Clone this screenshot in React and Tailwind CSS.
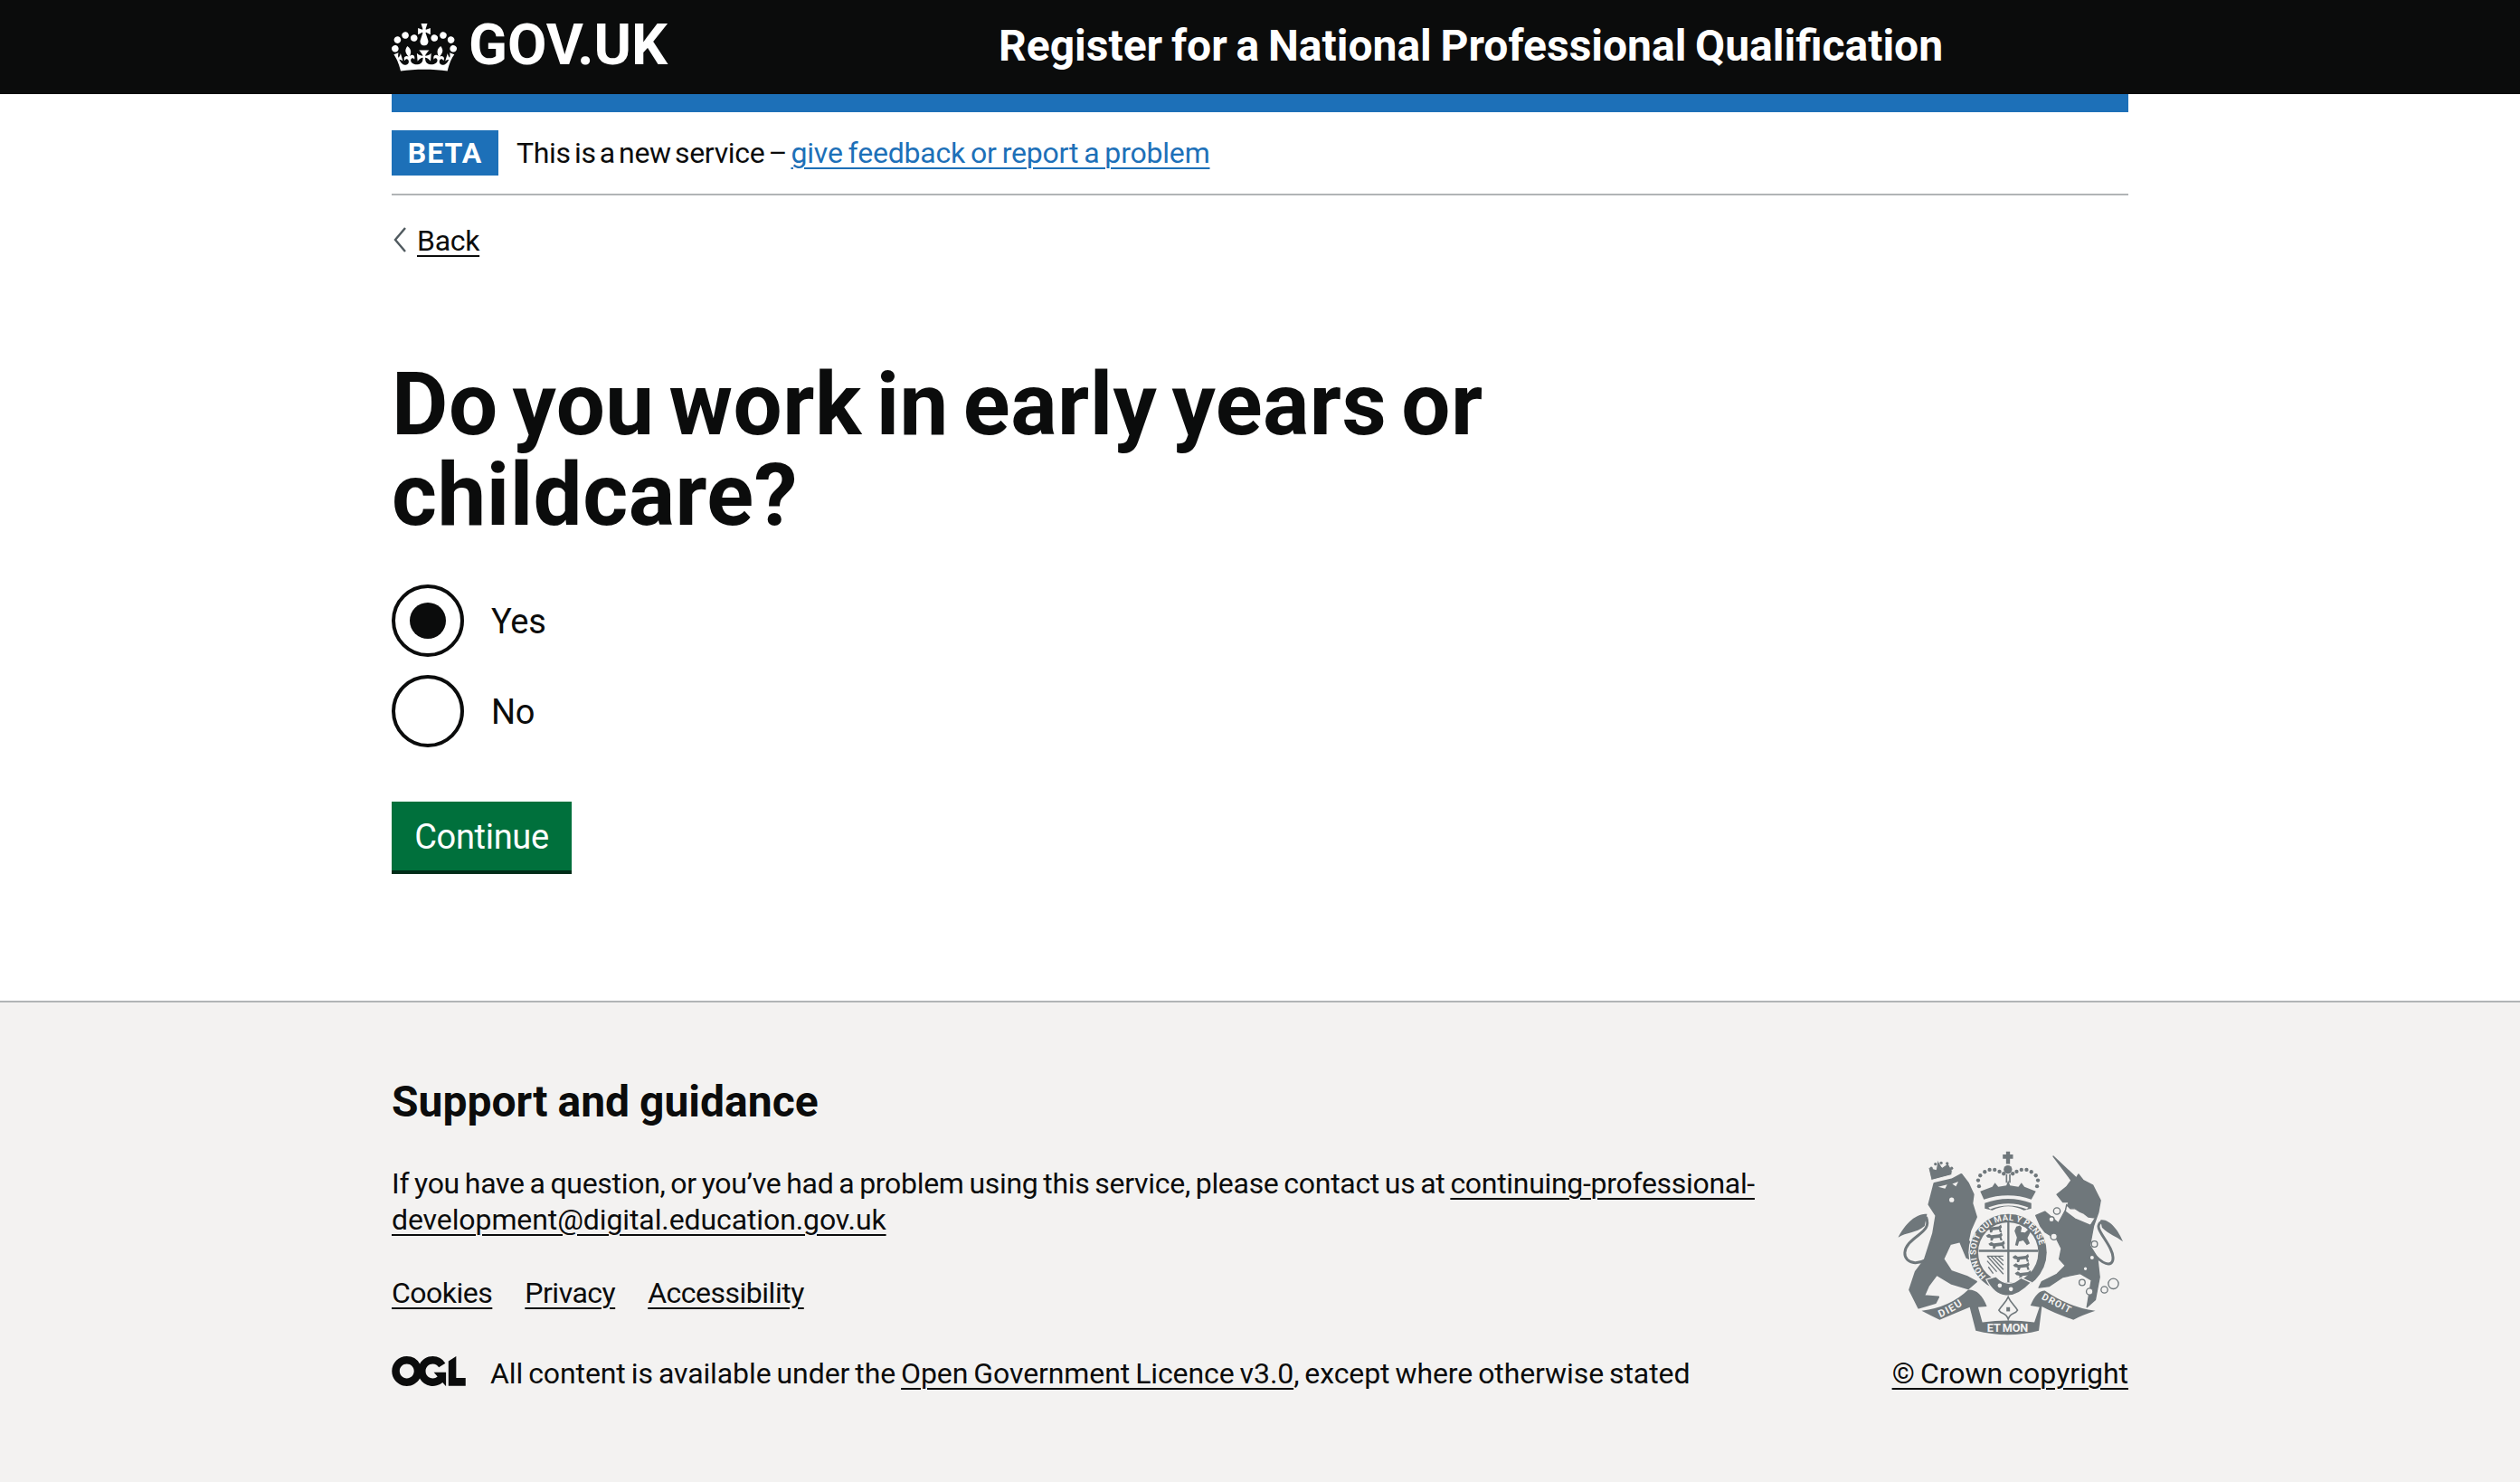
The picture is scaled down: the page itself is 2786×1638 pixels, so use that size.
import React from 'react';

const Crown = () => (
  <svg viewBox="0 0 132 97" className="w-[72px] h-[53px] fill-white shrink-0">
    <path d="M25 30.2c3.5 1.5 7.7-.2 9.1-3.7 1.5-3.6-.2-7.8-3.9-9.2-3.6-1.4-7.6.3-9.1 3.9-1.4 3.5.3 7.5 3.9 9zM9 39.5c3.6 1.5 7.8-.2 9.2-3.7 1.5-3.6-.2-7.8-3.9-9.1-3.6-1.5-7.6.2-9.1 3.8-1.4 3.5.3 7.5 3.8 9zM4.4 57.2c3.5 1.5 7.7-.2 9.1-3.8 1.5-3.6-.2-7.7-3.9-9.1-3.5-1.5-7.6.3-9.1 3.8-1.4 3.5.3 7.6 3.9 9.1zm38.3-21.4c3.5 1.5 7.7-.2 9.1-3.8 1.5-3.6-.2-7.7-3.9-9.1-3.6-1.5-7.6.3-9.1 3.8-1.3 3.6.4 7.7 3.9 9.1zm64.4-5.6c-3.6 1.5-7.8-.2-9.1-3.7-1.5-3.6.2-7.8 3.8-9.2 3.6-1.4 7.7.3 9.2 3.9 1.3 3.5-.4 7.5-3.9 9zm15.9 9.3c-3.6 1.5-7.7-.2-9.1-3.7-1.5-3.6.2-7.8 3.7-9.1 3.6-1.5 7.7.2 9.2 3.8 1.5 3.5-.3 7.5-3.8 9zm4.7 17.7c-3.6 1.5-7.8-.2-9.2-3.8-1.5-3.6.2-7.7 3.9-9.1 3.6-1.5 7.7.3 9.2 3.8 1.3 3.5-.4 7.6-3.9 9.1zM89.3 35.8c-3.6 1.5-7.8-.2-9.2-3.8-1.4-3.6.2-7.7 3.9-9.1 3.6-1.5 7.7.3 9.2 3.8 1.4 3.6-.3 7.7-3.9 9.1zM69.7 17.7l8.9 4.7V9.3l-8.9 2.8c-.2-.3-.5-.6-.9-.9L72.4 0H59.6l3.5 11.2c-.3.3-.6.5-.9.9l-8.8-2.8v13.1l8.8-4.7c.3.3.6.7.9.9l-5 15.4v.1c-.2.8-.4 1.6-.4 2.4 0 4.1 3.1 7.5 7 8.1h.2c.3 0 .7.1 1 .1.4 0 .7 0 1-.1h.2c4-.6 7.1-4.1 7.1-8.1 0-.8-.1-1.7-.4-2.4V34l-5.1-15.4c.4-.2.7-.6 1-.9zM66 92.8c16.9 0 32.8 1.1 47.1 3.2 4-16.9 8.9-26.7 14-33.5l-9.6-3.4c1 4.9 1.1 7.2 0 10.2-1.5-1.4-3-4.3-4.2-8.7L108.6 76c2.8-2 5-3.2 7.5-3.3-4.4 9.4-10 11.9-13.6 11.2-4.3-.8-6.3-4.6-5.6-7.9 1-4.7 5.7-5.9 8-.5 4.3-8.7-3-11.4-7.6-8.8 7.1-7.2 7.9-13.5 2.1-21.1-8 6.1-8.1 12.3-4.5 20.8-4.7-5.4-12.1-2.5-9.5 6.2 3.4-5.2 7.9-2 7.2 3.1-.6 4.3-6.4 7.8-13.5 7.2-10.3-.9-10.9-8-11.2-13.8 2.5-.5 7.1 1.8 11 7.3L80.2 60c-4.1 4.4-8 5.3-12.3 5.4 1.4-4.4 8-11.6 8-11.6H55.5s6.4 7.2 7.9 11.6c-4.2-.1-8-1-12.3-5.4l1.4 16.4c3.9-5.5 8.5-7.7 10.9-7.3-.3 5.8-.9 12.8-11.1 13.8-7.2.6-12.9-2.9-13.5-7.2-.7-5 3.8-8.3 7.1-3.1 2.7-8.7-4.6-11.6-9.4-6.2 3.7-8.5 3.6-14.7-4.6-20.8-5.8 7.6-5 13.9 2.2 21.1-4.7-2.6-11.9.1-7.7 8.8 2.3-5.5 7.1-4.2 8.1.5.7 3.3-1.3 7.1-5.7 7.9-3.5.7-9-1.8-13.5-11.2 2.5.1 4.7 1.3 7.5 3.3l-4.7-15.4c-1.2 4.4-2.7 7.2-4.3 8.7-1.1-3-.9-5.3 0-10.2l-9.5 3.4c5 6.9 9.9 16.7 14 33.5 14.8-2.1 30.8-3.2 47.7-3.2z" />
  </svg>
);

const OglLogo = () => (
  <svg viewBox="0 0 483.2 195.7" className="w-[82px] h-[33px] shrink-0 fill-[#0b0c0c] mt-[-6px]">
    <path d="M421.5 142.8V.1l-50.7 32.3v161.1h112.4v-50.7zm-122.3-9.6A47.12 47.12 0 0 1 221 97.8c0-26 21.1-47.1 47.1-47.1 16.7 0 31.4 8.7 39.7 21.8l42.7-27.2A97.63 97.63 0 0 0 268.1 0c-36.5 0-68.3 20.1-85.1 49.7A98 98 0 0 0 97.8 0C43.9 0 0 43.9 0 97.8s43.9 97.8 97.8 97.8c36.5 0 68.3-20.1 85.1-49.7a97.76 97.76 0 0 0 149.6 25.4l19.4 22.2h3v-87.8h-80l24.3 27.5zM97.8 145c-26 0-47.1-21.1-47.1-47.1s21.1-47.1 47.1-47.1 47.2 21 47.2 47S123.8 145 97.8 145" />
  </svg>
);

// royal arms, drawn by hand from the reference (viewBox is zoom crop coords)
const Crest = ({ className }) => {
  const ink = '#6f777b';
  const bg = '#f3f2f1';
  const chain = [[640, 270, 11], [622, 298, 9], [630, 355, 11], [765, 380, 10], [757, 425, 8], [735, 462, 7], [724, 508, 10], [749, 538, 11], [798, 532, 11], [828, 512, 17]];
  const arch = [[381, 188], [378, 168], [385, 152], [400, 140], [416, 133], [433, 133], [449, 139], [574, 188], [577, 168], [570, 152], [555, 140], [539, 133], [522, 133], [506, 139]];
  const passant = [[402, 325], [404, 352], [412, 379], [492, 423], [494, 450], [500, 477]];
  return (
    <svg viewBox="105 70 760 620" className={className}>
      {/* lion */}
      <path fill={ink} stroke={ink} strokeWidth="6" strokeLinejoin="round" d="M232 178 L290 165 L322 148 L345 178 L362 215 L358 245 L372 290 L352 335 L345 368 L385 418 L372 440 L340 425 L318 372 L285 380 L262 430 L288 470 L340 488 L372 505 L345 528 L290 512 L240 482 L212 520 L198 552 L246 556 L236 576 L180 592 L150 532 L170 472 L200 432 L228 345 L238 285 L214 248 Z" />
      <path fill="none" stroke={ink} strokeWidth="9" d="M205 432 C150 462 112 420 148 378 C180 342 222 335 205 290" />
      <path fill={ink} d="M208 280 C170 275 130 320 112 358 C140 340 170 345 200 320 Z" />
      <circle cx="290" cy="233" r="8" fill={bg} />
      <path fill={bg} d="M245 190 L275 182 L268 196 Z M292 180 L312 172 L304 188 Z" />
      <path fill={ink} stroke={bg} strokeWidth="3" d="M222 168 L212 125 L238 132 L243 100 L258 125 L278 112 L292 136 L290 150 Z" />
      {[[222, 128], [236, 114], [255, 110], [275, 112], [290, 128]].map(([x, y]) => (
        <circle key={x} cx={x} cy={y} r="5" fill={ink} />
      ))}

      {/* unicorn */}
      <path fill={ink} stroke={ink} strokeWidth="4" strokeLinejoin="round" d="M628 88 L705 160 L712 148 L728 168 L760 185 L785 235 L778 275 L762 320 L750 385 L775 425 L782 490 L768 565 L740 590 L745 560 L755 500 L718 478 L660 490 L615 520 L580 525 L590 505 L640 480 L668 452 L648 430 L655 395 L640 365 L600 340 L585 320 L570 285 L600 272 L645 310 L668 268 L680 240 L660 240 L640 215 L672 190 L688 168 Z" />
      <path fill="none" stroke={ink} strokeWidth="9" d="M768 420 C820 470 840 440 818 395 C795 350 760 320 790 305" />
      <path fill={ink} d="M785 300 C815 295 845 335 860 372 C835 352 815 350 790 325 Z" />
      <path fill={bg} stroke={ink} strokeWidth="4" d="M668 272 L672 250 L685 262 L700 262 L716 272 L730 278 L745 290 L768 293 L752 318 L700 296 Z" />
      {chain.map(([cx, cy, r]) => (
        <circle key={cx} cx={cx} cy={cy} r={r} fill={bg} stroke={ink} strokeWidth="4" />
      ))}

      {/* garter + shield */}
      <circle cx="478" cy="408" r="132" fill={bg} />
      <circle cx="478" cy="408" r="128" fill={ink} />
      <circle cx="478" cy="408" r="100" fill={bg} />
      <path fill={ink} d="M475 306 h7 v204 h-7 Z M380 399 h197 v7 h-197 Z" />
      {passant.map(([x, y]) => (
        <path key={`${x}-${y}`} fill={ink} d={`M${x} ${y} l10 -6 l8 5 l26 -3 l8 -6 l3 9 l-4 5 l4 12 l-7 0 l-3 -9 l-20 2 l-3 8 l-7 0 l0 -9 l-10 -2 Z`} />
      ))}
      <path fill={ink} d="M505 322 l12 -4 l6 8 l-3 14 l14 2 l14 -14 l4 12 l-10 20 l8 18 l-10 6 l-12 -16 l-14 4 l-4 14 l-9 -2 l6 -26 l-8 -22 Z" />
      <path fill="none" stroke={ink} strokeWidth="4" d="M408 420 L462 420 M408 420 L462 480 M420 420 L462 465 M432 420 L462 450 M444 420 L462 436 M408 436 L440 472 M412 456 L428 478" />
      <path id="garter" fill="none" d="M409 490 A 107 107 0 1 1 547 490" />
      <text fontFamily="'Roboto', sans-serif" fontWeight="700" fontSize="28" letterSpacing="1.5" fill={bg}>
        <textPath href="#garter" startOffset="1%">HONI SOIT QUI MAL Y PENSE</textPath>
      </text>
      <path fill={ink} stroke={bg} strokeWidth="4" d="M405 498 L437 488 Q478 530 520 492 L555 508 Q510 556 470 552 Q430 548 405 498 Z" />
      <circle cx="450" cy="518" r="7" fill={bg} />
      <circle cx="487" cy="530" r="7" fill={bg} />

      {/* crown */}
      <path fill={ink} d="M397 232 L385 205 L425 190 L434 176 L445 190 L472 185 L478 168 L484 185 L512 190 L522 176 L532 190 L570 205 L555 232 Q478 205 397 232 Z" />
      <path fill={ink} d="M400 244 Q478 215 555 244 L555 262 L530 268 Q478 240 425 268 L400 262 Z" />
      <path fill={bg} d="M412 258 Q478 232 545 258 L540 264 Q478 240 418 264 Z" />
      {arch.map(([cx, cy]) => (
        <circle key={`${cx}-${cy}`} cx={cx} cy={cy} r="6.5" fill={ink} />
      ))}
      <circle cx="463" cy="146" r="6.5" fill={ink} />
      <circle cx="493" cy="146" r="6.5" fill={ink} />
      <rect x="470" y="148" width="5" height="28" fill={ink} />
      <rect x="481" y="148" width="5" height="28" fill={ink} />
      <circle cx="477" cy="132" r="14" fill={ink} />
      <path fill={ink} d="M471 72 h13 v10 h10 v14 h-10 v18 h-13 v-18 h-11 v-14 h11 Z" />

      {/* motto ribbon */}
      <path fill={ink} d="M190 602 Q285 590 345 532 Q385 530 407 588 L378 590 L392 640 Q478 628 565 640 L582 590 L552 585 Q572 535 600 535 Q680 590 768 602 Q720 618 695 632 Q630 610 590 588 L580 668 Q478 695 370 668 L350 590 Q290 615 250 632 Q220 618 190 602 Z" />
      <path id="dieu" fill="none" d="M252 624 Q310 600 358 558" />
      <text fontFamily="'Roboto', sans-serif" fontWeight="700" fontSize="34" letterSpacing="4" fill={bg}>
        <textPath href="#dieu">DIEU</textPath>
      </text>
      <path id="droit" fill="none" d="M588 562 Q640 590 715 628" />
      <text fontFamily="'Roboto', sans-serif" fontWeight="700" fontSize="32" letterSpacing="3" fill={bg}>
        <textPath href="#droit">DROIT</textPath>
      </text>
      <text x="476" y="673" textAnchor="middle" fontFamily="'Roboto', sans-serif" fontWeight="700" fontSize="38" fill={bg}>ET MON</text>
      <path fill="none" stroke={ink} strokeWidth="5" d="M478 556 C470 575 455 585 447 600 C455 615 470 605 478 630 C486 605 501 615 509 600 C501 585 486 575 478 556 Z" />
      <path fill={ink} d="M472 590 h12 v14 h-12 Z" />
    </svg>
  );
};

const Radio = ({ label, checked }) => (
  <div className="flex items-center h-20">
    <div className="w-20 h-20 rounded-full border-4 border-[#0b0c0c] flex items-center justify-center shrink-0">
      {checked && <div className="w-10 h-10 rounded-full bg-[#0b0c0c]" />}
    </div>
    <span className="ml-[30px] pt-[2px] text-[38px] leading-[50px] text-[#0b0c0c]">{label}</span>
  </div>
);

export default function App() {
  return (
    <div className="min-h-[1638px] flex flex-col bg-white text-[#0b0c0c] font-['Roboto',sans-serif] tracking-[-0.3px] [word-spacing:-1.8px]">
      {/* HEADER */}
      <header className="bg-[#0b0c0c] h-[104px] shrink-0">
        <div className="mx-auto w-[1920px] h-full flex items-center">
          <div className="w-[671px] flex items-center gap-[13px] text-white">
            <Crown />
            <span className="text-[63px] leading-none font-bold tracking-normal mt-[-5px]">GOV.UK</span>
          </div>
          <span className="text-[48px] leading-[50px] font-bold text-white tracking-normal [word-spacing:-2.2px] mt-[-3px]">Register for a National Professional Qualification</span>
        </div>
      </header>

      {/* MAIN */}
      <main className="mx-auto w-[1920px] h-[1002px] shrink-0">
        <div className="h-5 bg-[#1d70b8]" />
        <div className="py-5 flex items-center border-b-2 border-[#b1b4b6] text-[32px] leading-[50px]">
          <strong className="w-[118px] h-[50px] bg-[#1d70b8] text-white text-center tracking-[1px] font-bold">BETA</strong>
          <span className="ml-5 [word-spacing:-3.5px]">This is a new service – <a className="text-[#1d70b8] underline decoration-2 underline-offset-[5px] tracking-[-0.2px] [word-spacing:-1.8px]">give feedback or report a problem</a></span>
        </div>
        <div className="mt-[30px] flex items-center h-10">
          <svg viewBox="0 0 14 28" className="w-[14px] h-[28px] mt-[-2px] ml-[2px] shrink-0" fill="none" stroke="#505a5f" strokeWidth="2.4">
            <path d="M13 1 L2 14 L13 27" />
          </svg>
          <a className="ml-3 text-[32px] leading-10 underline decoration-2 underline-offset-[5px]">Back</a>
        </div>

        <h1 className="mt-[111px] w-[1300px] text-[96px] leading-[100px] font-bold tracking-[0.5px] [word-spacing:-8.4px]">Do you work in early years or childcare?</h1>

        <div className="mt-[49px] flex flex-col gap-5">
          <Radio label="Yes" checked />
          <Radio label="No" />
        </div>

        <button className="mt-[60px] block w-[199px] h-[76px] pt-[2px] bg-[#00703c] shadow-[0_4px_0_#002d18] text-white text-[38px] leading-[50px]">Continue</button>
      </main>

      {/* FOOTER */}
      <footer className="flex-1 bg-[#f3f2f1] border-t-2 border-[#b1b4b6]">
        <div className="mx-auto w-[1920px] flex justify-between pt-[85px]">
          <div className="w-[1560px]">
            <h2 className="text-[48px] leading-[50px] font-bold tracking-normal [word-spacing:-1px]">Support and guidance</h2>
            <p className="mt-[45px] text-[32px] leading-10">
              If you have a question, or you’ve had a problem using this service, please contact us at <a className="underline decoration-2 underline-offset-[5px]">continuing-professional-<br /><span className="tracking-[-0.1px]">development@digital.education.gov.uk</span></a>
            </p>
            <ul className="mt-[41px] flex gap-[36px] text-[32px] leading-10 tracking-[-0.5px]">
              <li><a className="underline decoration-2 underline-offset-[5px]">Cookies</a></li>
              <li><a className="underline decoration-2 underline-offset-[5px]">Privacy</a></li>
              <li><a className="underline decoration-2 underline-offset-[5px]">Accessibility</a></li>
            </ul>
            <div className="mt-[49px] flex items-center gap-[27px] text-[32px] leading-10">
              <OglLogo />
              <span className="tracking-[-0.1px]">All content is available under the <a className="underline decoration-2 underline-offset-[5px]">Open Government Licence v3.0</a>, except where otherwise stated</span>
            </div>
          </div>
          <div className="flex flex-col items-end justify-end">
            <Crest className="w-[253px] h-[206px] mr-[4px]" />
            <a className="mt-[20px] text-[32px] leading-10 tracking-normal underline decoration-2 underline-offset-[5px]">© Crown copyright</a>
          </div>
        </div>
      </footer>
    </div>
  );
}
